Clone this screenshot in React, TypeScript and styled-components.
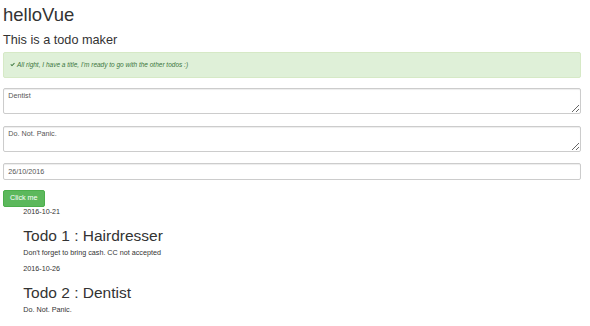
import { createGlobalStyle } from "styled-components";
import styled from "styled-components";

const GlobalStyle = createGlobalStyle`
  html, body {
    margin: 0;
    padding: 0;
    background: #fff;
  }
  body {
    font-family: "Liberation Sans", Helvetica, Arial, sans-serif;
    font-size: 7.2px;
    line-height: 10.3px;
    color: #333;
  }
  * {
    box-sizing: border-box;
  }
`;

const Page = styled.div`
  padding: 0 9px 0 3px;
`;

const Title = styled.h1`
  font-size: 18.5px;
  line-height: 20px;
  font-weight: 500;
  margin: 4.6px 0 0;
`;

const Subtitle = styled.h3`
  font-size: 12.7px;
  line-height: 14px;
  font-weight: 500;
  margin: 8.6px 0 0;
`;

const Alert = styled.div`
  margin: 4.4px 0 0;
  padding: 7.1px 6px;
  border: 1px solid #d6e9c6;
  border-radius: 2px;
  background: #dff0d8;
  color: #3c763d;
  font-size: 6.5px;
  line-height: 10.3px;
  font-style: italic;
  display: flex;
  align-items: center;
  gap: 2px;
`;

const CheckIcon = styled.svg`
  width: 5px;
  height: 5px;
  flex: none;
`;

const Form = styled.form`
  margin-top: 10.2px;
  display: flex;
  flex-direction: column;
  align-items: flex-start;
`;

const TextArea = styled.textarea`
  display: block;
  width: 100%;
  height: 26px;
  margin: 0 0 11.3px;
  padding: 2px 4.3px;
  border: 1px solid #ccc;
  border-radius: 2px;
  box-shadow: inset 0 1px 1px rgba(0, 0, 0, 0.075);
  font-family: inherit;
  font-size: 7.2px;
  line-height: 10.3px;
  color: #555;
  resize: vertical;
`;

const TextInput = styled.input`
  display: block;
  width: 100%;
  height: 17.3px;
  margin: 0;
  padding: 0 4.3px;
  border: 1px solid #ccc;
  border-radius: 2px;
  box-shadow: inset 0 1px 1px rgba(0, 0, 0, 0.075);
  font-family: inherit;
  font-size: 7.2px;
  color: #555;
`;

const Button = styled.button`
  margin-top: 9.4px;
  height: 17px;
  padding: 0 6px;
  border: 1px solid #4cae4c;
  border-radius: 2px;
  background: #5cb85c;
  color: #fff;
  font-family: inherit;
  font-size: 7.2px;
  line-height: 10.3px;
  cursor: pointer;
`;

const TodoList = styled.ul`
  list-style: none;
  margin: 0;
  padding: 0 0 0 20.3px;
`;

const TodoItem = styled.li``;

const TodoDate = styled.div`
  margin: 0;
`;

const TodoTitle = styled.h2`
  font-size: 15.5px;
  line-height: 17px;
  font-weight: 500;
  margin: 10.4px 0 4.2px;
`;

const TodoText = styled.p`
  margin: 0 0 4.8px;
`;

const todos = [
  {
    date: "2016-10-21",
    title: "Hairdresser",
    content: "Don't forget to bring cash. CC not accepted",
  },
  { date: "2016-10-26", title: "Dentist", content: "Do. Not. Panic." },
];

export default function App() {
  return (
    <Page>
      <GlobalStyle />
      <Title>helloVue</Title>
      <Subtitle>This is a todo maker</Subtitle>
      <Alert>
        <CheckIcon viewBox="0 0 10 10">
          <path d="M0.8 5.4 L2.2 4 L4 5.8 L8.2 1.4 L9.6 2.8 L4 8.6 Z" fill="#3c763d" />
        </CheckIcon>
        All right, I have a title, I'm ready to go with the other todos :)
      </Alert>
      <Form onSubmit={(e) => e.preventDefault()}>
        <TextArea defaultValue="Dentist" />
        <TextArea defaultValue="Do. Not. Panic." />
        <TextInput type="text" defaultValue="26/10/2016" />
        <Button type="submit">Click me</Button>
      </Form>
      <TodoList>
        {todos.map((todo, i) => (
          <TodoItem key={todo.date}>
            <TodoDate>{todo.date}</TodoDate>
            <TodoTitle>
              Todo {i + 1} : {todo.title}
            </TodoTitle>
            <TodoText>{todo.content}</TodoText>
          </TodoItem>
        ))}
      </TodoList>
    </Page>
  );
}
